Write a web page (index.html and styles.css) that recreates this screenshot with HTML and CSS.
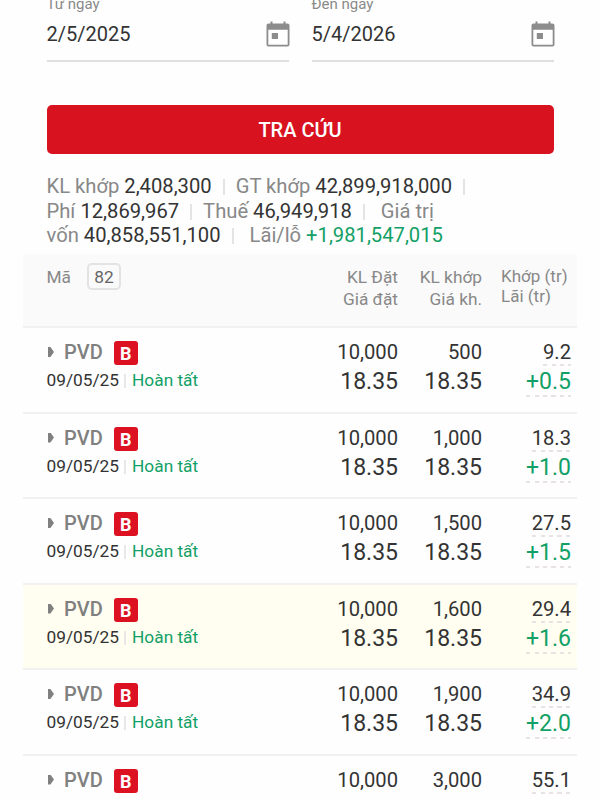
FILE: index.html
```
<!DOCTYPE html>
<html lang="vi">

<head>
    <meta charset="UTF-8">
    <title>Tra cứu lệnh</title>
    <link rel="stylesheet" href="styles.css">
</head>

<body>
    <div class="page">
        <div class="dates">
            <div class="date_box">
                <div class="date_label">Từ ngày</div>
                <div class="date_row">
                    <span>2/5/2025</span>
                    <svg class="calendar" viewBox="0 0 24 26">
                        <path d="M2.5 2.5h2V.5h2v2h11v-2h2v2h2a2 2 0 0 1 2 2v19a2 2 0 0 1-2 2h-19a2 2 0 0 1-2-2v-19a2 2 0 0 1 2-2zM2.300 8.800v14.900h19.400V8.800z" fill-rule="evenodd"/>
                        <path d="M5.800 12h6.200v6H5.800z"/>
                    </svg>
                </div>
            </div>
            <div class="date_box">
                <div class="date_label">Đến ngày</div>
                <div class="date_row">
                    <span>5/4/2026</span>
                    <svg class="calendar" viewBox="0 0 24 26">
                        <path d="M2.5 2.5h2V.5h2v2h11v-2h2v2h2a2 2 0 0 1 2 2v19a2 2 0 0 1-2 2h-19a2 2 0 0 1-2-2v-19a2 2 0 0 1 2-2zM2.300 8.800v14.900h19.400V8.800z" fill-rule="evenodd"/>
                        <path d="M5.800 12h6.200v6H5.800z"/>
                    </svg>
                </div>
            </div>
        </div>

        <button class="btn_search">TRA CỨU</button>

        <div class="summary">
            <div>KL khớp <b>2,408,300</b><i class="sep"></i>GT khớp <b>42,899,918,000</b><i class="sep"></i></div>
            <div>Phí <b>12,869,967</b><i class="sep"></i>Thuế <b>46,949,918</b><i class="sep sep_wide"></i>Giá trị</div>
            <div>vốn <b>40,858,551,100</b><i class="sep sep_wide"></i>Lãi/lỗ <b class="up">+1,981,547,015</b></div>
        </div>

        <div class="orders">
            <div class="row head">
                <div class="ma">Mã<span class="count">82</span></div>
                <div class="num">KL Đặt<br>Giá đặt</div>
                <div class="num">KL khớp<br>Giá kh.</div>
                <div class="head_last">Khớp (tr)<br>Lãi (tr)</div>
            </div>

            <div class="row">
                <div>
                    <div class="code"><i class="arrow"></i>PVD<span class="buy">B</span></div>
                    <div class="status">09/05/25<i class="bar"></i><span class="up">Hoàn tất</span></div>
                </div>
                <div class="num"><div class="qty">10,000</div><div class="price">18.35</div></div>
                <div class="num"><div class="qty">500</div><div class="price">18.35</div></div>
                <div class="num"><div class="qty"><span class="dash">9.2</span></div><div class="price"><span class="dash up">+0.5</span></div></div>
            </div>

            <div class="row">
                <div>
                    <div class="code"><i class="arrow"></i>PVD<span class="buy">B</span></div>
                    <div class="status">09/05/25<i class="bar"></i><span class="up">Hoàn tất</span></div>
                </div>
                <div class="num"><div class="qty">10,000</div><div class="price">18.35</div></div>
                <div class="num"><div class="qty">1,000</div><div class="price">18.35</div></div>
                <div class="num"><div class="qty"><span class="dash">18.3</span></div><div class="price"><span class="dash up">+1.0</span></div></div>
            </div>

            <div class="row">
                <div>
                    <div class="code"><i class="arrow"></i>PVD<span class="buy">B</span></div>
                    <div class="status">09/05/25<i class="bar"></i><span class="up">Hoàn tất</span></div>
                </div>
                <div class="num"><div class="qty">10,000</div><div class="price">18.35</div></div>
                <div class="num"><div class="qty">1,500</div><div class="price">18.35</div></div>
                <div class="num"><div class="qty"><span class="dash">27.5</span></div><div class="price"><span class="dash up">+1.5</span></div></div>
            </div>

            <div class="row active">
                <div>
                    <div class="code"><i class="arrow"></i>PVD<span class="buy">B</span></div>
                    <div class="status">09/05/25<i class="bar"></i><span class="up">Hoàn tất</span></div>
                </div>
                <div class="num"><div class="qty">10,000</div><div class="price">18.35</div></div>
                <div class="num"><div class="qty">1,600</div><div class="price">18.35</div></div>
                <div class="num"><div class="qty"><span class="dash">29.4</span></div><div class="price"><span class="dash up">+1.6</span></div></div>
            </div>

            <div class="row">
                <div>
                    <div class="code"><i class="arrow"></i>PVD<span class="buy">B</span></div>
                    <div class="status">09/05/25<i class="bar"></i><span class="up">Hoàn tất</span></div>
                </div>
                <div class="num"><div class="qty">10,000</div><div class="price">18.35</div></div>
                <div class="num"><div class="qty">1,900</div><div class="price">18.35</div></div>
                <div class="num"><div class="qty"><span class="dash">34.9</span></div><div class="price"><span class="dash up">+2.0</span></div></div>
            </div>

            <div class="row">
                <div>
                    <div class="code"><i class="arrow"></i>PVD<span class="buy">B</span></div>
                    <div class="status">09/05/25<i class="bar"></i><span class="up">Hoàn tất</span></div>
                </div>
                <div class="num"><div class="qty">10,000</div><div class="price">18.35</div></div>
                <div class="num"><div class="qty">3,000</div><div class="price">18.35</div></div>
                <div class="num"><div class="qty"><span class="dash">55.1</span></div><div class="price"><span class="dash up">+3.2</span></div></div>
            </div>
        </div>
    </div>
</body>

</html>
```
FILE: styles.css
```
* {
    box-sizing: border-box;
}

body {
    margin: 0;
    background: #fefefe;
    color: #333;
    font-family: Roboto, "Noto Sans", sans-serif;
    font-size: 20px;
}

.page {
    height: 800px;
    overflow: hidden;
}

.dates {
    display: flex;
    gap: 23px;
    height: 62px;
    padding: 0 46.5px;
}

.date_box {
    flex: 1;
    border-bottom: 2px solid #dfdfdf;
}

.date_label {
    height: 14px;
    margin-top: -5px;
    color: #8a8a8a;
    font-size: 15px;
    line-height: 19px;
}

.date_row {
    display: flex;
    justify-content: space-between;
    align-items: center;
    height: 49px;
}

.calendar {
    width: 24px;
    height: 26px;
    margin-right: -1px;
    fill: #8c8c8c;
}

.btn_search {
    display: block;
    width: 507px;
    height: 49px;
    margin: 43px 0 0 46.5px;
    padding: 0;
    border: 0;
    border-radius: 5px;
    background: #d8121f;
    color: white;
    font-family: inherit;
    font-size: 20px;
    font-weight: 500;
}

.summary {
    height: 100px;
    padding: 20px 0 0 46.5px;
    color: #888;
    font-size: 20.2px;
    line-height: 24.7px;
    white-space: nowrap;
}

.summary b {
    color: #333;
    font-weight: 400;
}

.sep {
    display: inline-block;
    width: 2px;
    height: 16px;
    margin: 0 11px;
    background: #e4e4e4;
    vertical-align: -2px;
}

.sep_wide {
    margin-right: 16px;
}

.summary .up,
.up {
    color: #12a066;
}

.orders {
    margin: 0 23px;
}

.row {
    display: grid;
    grid-template-columns: 1fr 100px 84px 89px;
    height: 85.5px;
    padding: 11px 6px 0 23px;
    border-bottom: 2px solid #f1f1f1;
}

.head {
    height: 74px;
    padding-top: 12px;
    background: #fafafa;
    color: #888;
    font-size: 17.3px;
    line-height: 22px;
}

.ma {
    display: flex;
    align-items: center;
    height: 27px;
    margin-top: -3px;
    padding-left: .5px;
}

.count {
    width: 34px;
    height: 27px;
    margin-left: 16px;
    border: 2px solid #e3e3e3;
    border-radius: 5px;
    color: #666;
    line-height: 24px;
    text-align: center;
}

.num {
    text-align: right;
}

.head_last {
    padding-left: 19px;
    font-size: 17px;
    line-height: 20px;
    white-space: nowrap;
}

.active {
    background: #fffef0;
}

.code {
    display: flex;
    align-items: center;
    height: 26px;
    color: #808080;
    font-weight: 500;
}

.arrow {
    width: 6px;
    height: 10px;
    margin: 0 10px 0 2px;
    background: #808080;
    clip-path: polygon(0 0, 40% 0, 100% 50%, 40% 100%, 0 100%);
}

.buy {
    width: 24px;
    height: 24px;
    margin: 2px 0 0 11px;
    border-radius: 3px;
    background: #dc1223;
    color: white;
    font-size: 18px;
    font-weight: 700;
    line-height: 25px;
    text-align: center;
}

.status {
    height: 30px;
    padding-left: .5px;
    font-size: 17.3px;
    line-height: 30px;
}

.bar {
    display: inline-block;
    width: 2px;
    height: 14px;
    margin: 0 6px 0 5px;
    background: #e8e8e8;
    vertical-align: -2px;
}

.qty {
    height: 27px;
    font-size: 20.2px;
    line-height: 26px;
}

.price {
    height: 32px;
    font-size: 23px;
    line-height: 32px;
}

.dash {
    display: inline-block;
    height: 27px;
    background: repeating-linear-gradient(90deg, #e8e2e2 0 4px, transparent 4px 8.5px) left bottom / 100% 2px no-repeat;
}

.price .dash {
    height: 31px;
}
```
